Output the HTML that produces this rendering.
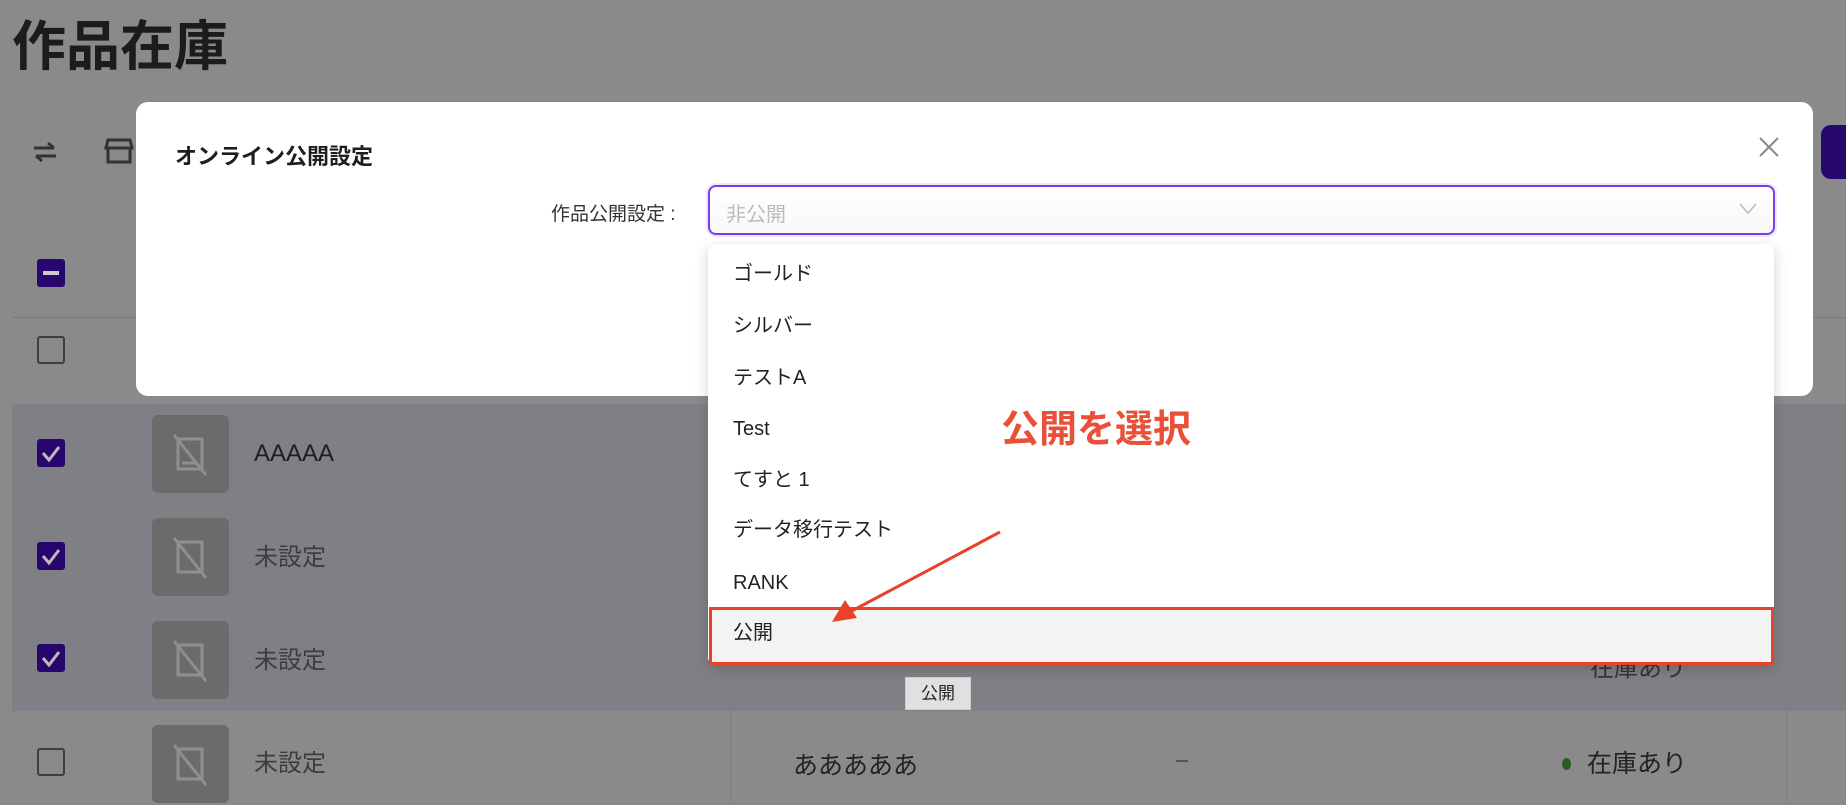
<!DOCTYPE html>
<html><head><meta charset="utf-8"><style>
*{margin:0;padding:0;box-sizing:border-box}
body{width:1846px;height:804px;overflow:hidden;background:#8a8a8a;font-family:"Liberation Sans","Noto Sans CJK JP",sans-serif;position:relative;color:#222}
.a{position:absolute}
.cb{position:absolute;left:37px;width:28px;height:28px;border-radius:3px}
.cbo{border:2.5px solid #3f3f3f}
.cbf{background:#27066e}
.th{position:absolute;left:152px;width:77px;height:78px;background:#6b6b6b;border-radius:6px}
.rt{position:absolute;left:254px;font-size:24px;color:#3d3d3d}
.item{position:absolute;left:733px;font-size:20px;color:#222;line-height:24px}
</style></head><body>
<div class="a" style="left:12px;top:2px;font-size:54px;font-weight:bold;color:#1c1c1c">作品在庫</div>
<svg class="a" style="left:30px;top:140px" width="30" height="24" viewBox="0 0 30 24"><path d="M4 8h20M18 3l6 5M26 16H6M12 21l-6-5" stroke="#333" stroke-width="3" fill="none"/></svg>
<svg class="a" style="left:104px;top:136px" width="30" height="30" viewBox="0 0 30 30"><path d="M4 4h22l2 8H2zM4 12v14h22V12" stroke="#333" stroke-width="3" fill="none"/></svg>
<div class="a" style="left:1821px;top:125px;width:40px;height:54px;background:#27066e;border-radius:10px"></div>
<div class="cb cbf" style="top:259px"><div class="a" style="left:6px;top:12px;width:16px;height:4px;background:#ccc"></div></div>
<div class="a" style="left:12px;top:317px;width:1834px;height:1px;background:#7a7a7a"></div>
<div class="cb cbo" style="top:336px"></div>
<div class="a" style="left:12px;top:404px;width:1834px;height:307px;background:#807f85"></div>
<div class="a" style="left:730px;top:711px;width:1px;height:93px;background:#7d7d7d"></div>
<div class="a" style="left:1786px;top:711px;width:1px;height:93px;background:#7d7d7d"></div>
<div class="cb cbf" style="top:439px"></div><div class="cb cbf" style="top:542px"></div><div class="cb cbf" style="top:644px"></div>
<svg class="a" style="left:37px;top:439px" width="28" height="232"><g stroke="#bbb" stroke-width="3" fill="none"><path d="M6 14l6 7 10-13"/><path d="M6 117l6 7 10-13"/><path d="M6 219l6 7 10-13"/></g></svg>
<div class="cb cbo" style="top:748px"></div>
<div class="th" style="top:415px"></div><div class="th" style="top:518px"></div><div class="th" style="top:621px"></div><div class="th" style="top:725px"></div>
<svg class="a" style="left:152px;top:415px" width="77" height="390"><g stroke="#8f8f8f" stroke-width="3" fill="none"><path d="M26 24h24v30H26zM22 20l32 40M30 48h14"/><path d="M26 127h24v30H26zM22 123l32 40"/><path d="M26 230h24v30H26zM22 226l32 40"/><path d="M26 334h24v30H26zM22 330l32 40"/></g></svg>
<div class="rt" style="top:440px;color:#1e1e1e">AAAAA</div>
<div class="rt" style="top:537px">未設定</div>
<div class="rt" style="top:640px">未設定</div>
<div class="rt" style="top:743px">未設定</div>
<div class="a" style="left:793px;top:746px;font-size:25px;color:#222">あああああ</div>
<div class="a" style="left:1176px;top:760px;width:12px;height:2px;background:#555"></div>
<div class="a" style="left:1562px;top:758px;width:9px;height:12px;border-radius:50%;background:#2a5b23"></div>
<div class="a" style="left:1587px;top:744px;font-size:25px;color:#222">在庫あり</div>
<div class="a" style="left:1590px;top:648px;font-size:24px;color:#333">在庫あり</div>
<div class="a" style="left:136px;top:102px;width:1677px;height:294px;background:#fff;border-radius:12px"></div>
<div class="a" style="left:175px;top:139px;font-size:22px;font-weight:bold;color:#1e1e1e">オンライン公開設定</div>
<svg class="a" style="left:1758px;top:136px" width="22" height="22"><path d="M2 2l18 18M20 2L2 20" stroke="#888" stroke-width="2"/></svg>
<div class="a" style="left:551px;top:199px;font-size:19px;color:#333">作品公開設定 :</div>
<div class="a" style="left:708px;top:185px;width:1067px;height:50px;border:2px solid #7b3ee6;border-radius:8px;background:linear-gradient(#fff,#f8f8f8);box-shadow:0 0 0 2px #efe5fc"></div>
<div class="a" style="left:726px;top:198px;font-size:20px;color:#bcbcbc">非公開</div>
<svg class="a" style="left:1739px;top:203px" width="18" height="12"><path d="M1 1l8 9 8-9" stroke="#bbb" stroke-width="1.5" fill="none"/></svg>
<div class="a" style="left:708px;top:244px;width:1066px;height:421px;background:#fff;border-radius:8px;box-shadow:0 4px 14px rgba(0,0,0,.18)"></div>
<div class="a" style="left:709px;top:607px;width:1065px;height:58px;background:#f3f3f3;border:3.5px solid #e8432a"></div>
<div class="item" style="top:262px">ゴールド</div>
<div class="item" style="top:314px">シルバー</div>
<div class="item" style="top:366px">テストA</div>
<div class="item" style="top:417px">Test</div>
<div class="item" style="top:468px">てすと 1</div>
<div class="item" style="top:518px">データ移行テスト</div>
<div class="item" style="top:571px">RANK</div>
<div class="item" style="top:621px">公開</div>
<div class="a" style="left:1001px;top:398px;font-size:38px;font-weight:bold;color:#ea5037">公開を選択</div>
<svg class="a" style="left:820px;top:525px" width="190" height="105"><path d="M180 7L28 88" stroke="#e8432a" stroke-width="3"/><path d="M12 97l13-22 12 18z" fill="#e8432a"/></svg>
<div class="a" style="left:905px;top:677px;width:66px;height:33px;background:#e0e0e0;border:1px solid #ccc;font-size:17px;line-height:31px;text-align:center;color:#222">公開</div>
</body></html>
